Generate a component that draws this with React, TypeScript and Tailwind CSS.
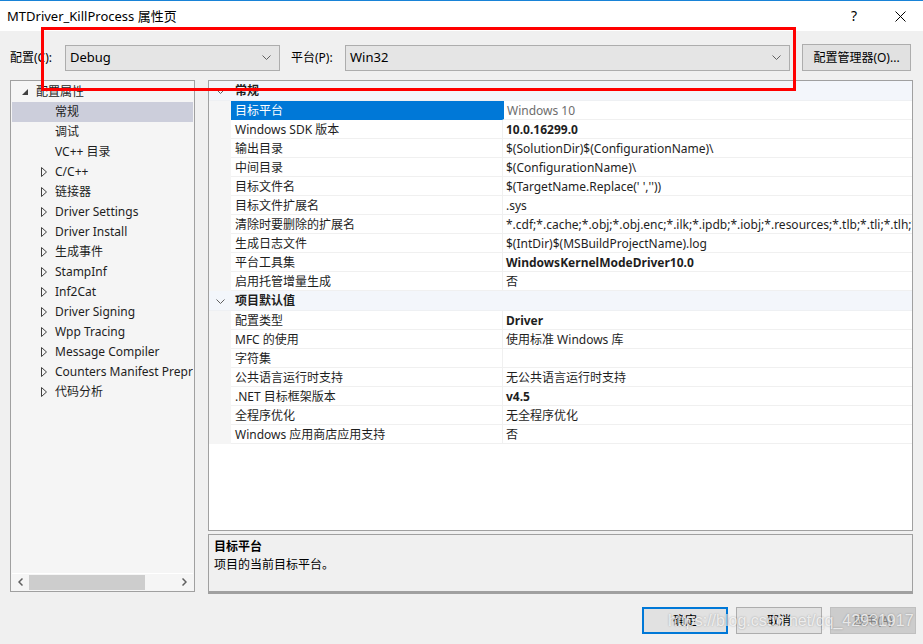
const treeItems = [
  { label: '常规', arrow: false, selected: true },
  { label: '调试', arrow: false },
  { label: 'VC++ 目录', arrow: false },
  { label: 'C/C++', arrow: true },
  { label: '链接器', arrow: true },
  { label: 'Driver Settings', arrow: true },
  { label: 'Driver Install', arrow: true },
  { label: '生成事件', arrow: true },
  { label: 'StampInf', arrow: true },
  { label: 'Inf2Cat', arrow: true },
  { label: 'Driver Signing', arrow: true },
  { label: 'Wpp Tracing', arrow: true },
  { label: 'Message Compiler', arrow: true },
  { label: 'Counters Manifest Preprocessor', arrow: true },
  { label: '代码分析', arrow: true },
];

type Prop = { name: string; value: string; bold?: boolean; selected?: boolean };

const general: Prop[] = [
  { name: '目标平台', value: 'Windows 10', selected: true },
  { name: 'Windows SDK 版本', value: '10.0.16299.0', bold: true },
  { name: '输出目录', value: '$(SolutionDir)$(ConfigurationName)\\' },
  { name: '中间目录', value: '$(ConfigurationName)\\' },
  { name: '目标文件名', value: "$(TargetName.Replace(' ',''))" },
  { name: '目标文件扩展名', value: '.sys' },
  {
    name: '清除时要删除的扩展名',
    value: '*.cdf;*.cache;*.obj;*.obj.enc;*.ilk;*.ipdb;*.iobj;*.resources;*.tlb;*.tli;*.tlh;*.tmp;*.rsp;*.pgc;*.pgd',
  },
  { name: '生成日志文件', value: '$(IntDir)$(MSBuildProjectName).log' },
  { name: '平台工具集', value: 'WindowsKernelModeDriver10.0', bold: true },
  { name: '启用托管增量生成', value: '否' },
];

const defaults: Prop[] = [
  { name: '配置类型', value: 'Driver', bold: true },
  { name: 'MFC 的使用', value: '使用标准 Windows 库' },
  { name: '字符集', value: '' },
  { name: '公共语言运行时支持', value: '无公共语言运行时支持' },
  { name: '.NET 目标框架版本', value: 'v4.5', bold: true },
  { name: '全程序优化', value: '无全程序优化' },
  { name: 'Windows 应用商店应用支持', value: '否' },
];

const Chevron = ({ className = '' }: { className?: string }) => (
  <svg width="9" height="5" viewBox="0 0 9 5" className={className}>
    <polyline points="0.5,0.5 4.5,4.5 8.5,0.5" fill="none" stroke="#606060" strokeWidth="1" />
  </svg>
);

const Combo = ({ value, width }: { value: string; width: string }) => (
  <div className={`${width} h-[26px] bg-[#e5e5e5] border border-[#adadad] flex items-center pl-[4px] pr-[8px]`}>
    <span className="flex-1 text-[13px] text-black">{value}</span>
    <Chevron />
  </div>
);

const Category = ({ label }: { label: string }) => (
  <div className="h-[20px] flex items-center bg-[#f3f6fb] border-b border-[#eef0f3] pt-px">
    <div className="w-[22px] flex justify-center">
      <Chevron />
    </div>
    <span className="pl-[4px] font-bold text-[12px] text-[#1e1e1e]">{label}</span>
  </div>
);

const Row = ({ p }: { p: Prop }) => (
  <div className="h-[19px] flex">
    <div className="w-[22px] bg-[#f5f5f5] shrink-0" />
    <div
      className={`w-[271px] shrink-0 flex items-center pl-[4px] pt-px border-b ${
        p.selected ? 'bg-[#0078d7] text-white border-[#0078d7]' : 'bg-white text-[#1e1e1e] border-[#f0f0f0]'
      }`}
    >
      {p.name}
    </div>
    <div
      className={`flex-1 min-w-0 flex items-center pl-[3px] pt-px bg-white border-b border-[#f0f0f0] border-l whitespace-nowrap overflow-hidden ${
        p.selected ? 'border-l-2 border-l-[#0078d7] text-[#6d6d6d]' : 'border-l-[#f0f0f0] text-[#1e1e1e]'
      } ${p.bold ? 'font-bold' : ''}`}
    >
      {p.value}
    </div>
  </div>
);

const Button = ({ label, primary, disabled }: { label: string; primary?: boolean; disabled?: boolean }) => (
  <div
    className={`w-[86px] h-[27px] flex items-center justify-center text-[12px] ${
      primary
        ? 'border-2 border-[#0078d7] bg-[#e1e1e1] text-black'
        : disabled
        ? 'border border-[#bfbfbf] bg-[#cccccc] text-[#838383]'
        : 'border border-[#adadad] bg-[#e1e1e1] text-black'
    }`}
  >
    {label}
  </div>
);

export default function App() {
  return (
    <div className="relative w-[923px] h-[644px] bg-[#f0f0f0] overflow-hidden font-['Noto_Sans','Noto_Sans_CJK_SC',sans-serif] text-[12px] leading-none">
      {/* title bar */}
      <div className="h-[31px] bg-white border-t border-[#1883d7] flex items-center pl-[7px]">
        <span className="flex-1 text-[13px] text-black">MTDriver_KillProcess 属性页</span>
        <span className="w-[46px] text-center text-[14px] text-black">?</span>
        <div className="w-[46px] flex justify-center">
          <svg width="11" height="11" viewBox="0 0 11 11">
            <path d="M0.5 0.5 L10.5 10.5 M10.5 0.5 L0.5 10.5" stroke="#000" strokeWidth="1" />
          </svg>
        </div>
      </div>

      {/* config row */}
      <div className="mt-[13px] h-[27px] flex items-center pl-[10px]">
        <span className="w-[55px] text-[12px] text-black">配置(C):</span>
        <Combo value="Debug" width="w-[215px]" />
        <span className="ml-[11px] w-[54px] text-[12px] text-black">平台(P):</span>
        <Combo value="Win32" width="w-[445px]" />
        <div className="ml-[12px] w-[109px] h-[27px] bg-[#e1e1e1] border border-[#adadad] flex items-center justify-center text-[12px] text-black">
          配置管理器(O)...
        </div>
      </div>

      {/* main */}
      <div className="mt-[9px] flex pl-[10px] gap-[13px]">
        {/* tree */}
        <div className="w-[185px] h-[512px] bg-[#f5f5f5] border border-[#a0a0a0] flex flex-col p-px">
          <div className="flex-1 overflow-hidden">
            <div className="h-[20px] flex items-center">
              <svg width="7" height="7" viewBox="0 0 7 7" className="ml-[10px] shrink-0">
                <polygon points="6,0 6,6 0,6" fill="#404040" />
              </svg>
              <span className="ml-[7px] text-[#1e1e1e] whitespace-nowrap">配置属性</span>
            </div>
            {treeItems.map((t) => (
              <div
                key={t.label}
                className={`h-[20px] flex items-center whitespace-nowrap overflow-hidden ${t.selected ? 'bg-[#cccedb]' : ''}`}
              >
                <div className="w-[43px] shrink-0 flex justify-end pr-[8px]">
                  {t.arrow && (
                    <svg width="6" height="10" viewBox="0 0 6 10">
                      <polygon points="0.5,0.5 5.5,5 0.5,9.5" fill="none" stroke="#404040" strokeWidth="1" />
                    </svg>
                  )}
                </div>
                <span className="text-[#1e1e1e]">{t.label}</span>
              </div>
            ))}
          </div>
          <div className="h-[17px] border-t border-white flex items-center">
            <div className="w-[17px] flex justify-center">
              <svg width="5" height="8" viewBox="0 0 5 8">
                <polyline points="4.5,0.5 1,4 4.5,7.5" fill="none" stroke="#606060" strokeWidth="1.5" />
              </svg>
            </div>
            <div className="w-[116px] h-[15px] bg-[#cdcdcd]" />
            <div className="flex-1" />
            <div className="w-[17px] flex justify-center">
              <svg width="5" height="8" viewBox="0 0 5 8">
                <polyline points="0.5,0.5 4,4 0.5,7.5" fill="none" stroke="#606060" strokeWidth="1.5" />
              </svg>
            </div>
          </div>
        </div>

        {/* property grid + description */}
        <div className="w-[705px] flex flex-col">
          <div className="h-[451px] bg-white border border-[#a0a0a0] overflow-hidden">
            <Category label="常规" />
            {general.map((p) => (
              <Row key={p.name} p={p} />
            ))}
            <Category label="项目默认值" />
            {defaults.map((p) => (
              <Row key={p.name} p={p} />
            ))}
          </div>
          <div className="mt-[3px] h-[60px] bg-[#f0f0f0] border border-[#a0a0a0] border-b-[3px] pl-[5px] pt-[6px]">
            <div className="font-bold text-[12px] text-black h-[18px]">目标平台</div>
            <div className="text-[12px] text-black">项目的当前目标平台。</div>
          </div>
        </div>
      </div>

      {/* buttons */}
      <div className="mt-[13px] flex justify-end gap-[8px] pr-[7px]">
        <Button label="确定" primary />
        <Button label="取消" />
        <Button label="应用(A)" disabled />
      </div>

      {/* annotation */}
      <div className="absolute left-[41px] top-[27px] w-[755px] h-[64px] border-[3px] border-[#ff0000] pointer-events-none" />

      {/* watermark */}
      <div className="absolute left-[668px] top-[613px] text-[16px] font-['Liberation_Sans',sans-serif] text-white/75 [text-shadow:0_0_2px_rgba(0,0,0,0.3)] whitespace-nowrap">
        https://blog.csdn.net/qq_42931917
      </div>
    </div>
  );
}
